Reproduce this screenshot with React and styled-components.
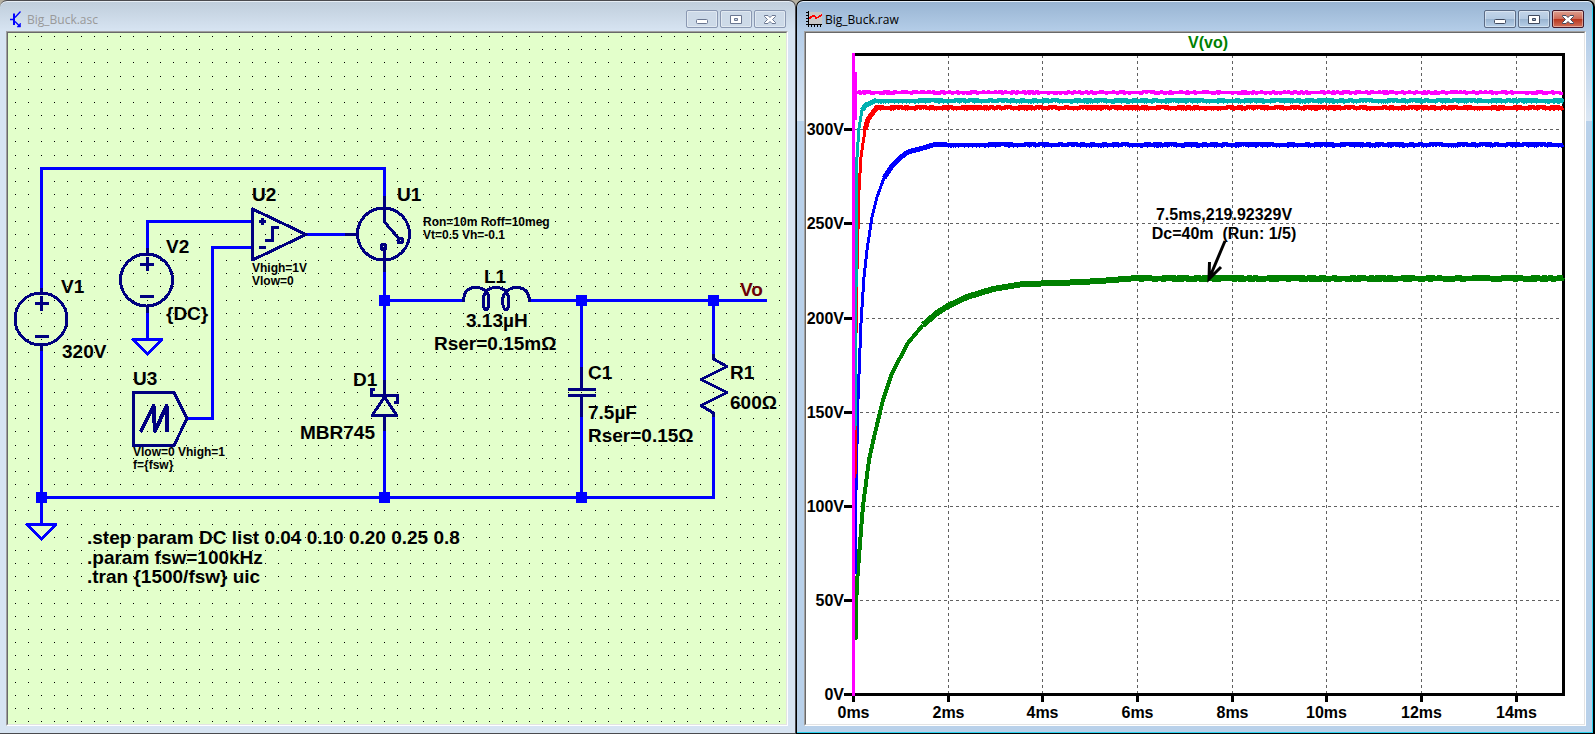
import styled, { createGlobalStyle } from "styled-components";

const WIRE = "#0000ff";
const SYMBOL = "#000080";

const DOT_STEP = 13.18;

function dotGridPath() {
  let d = "";
  for (let row = 0; row < 53; row++) {
    const y = Math.floor(36.5 + row * DOT_STEP);
    for (let col = 0; col < 59; col++) {
      const x = Math.floor(15.2 + col * DOT_STEP);
      d += `M${x} ${y}h1v1h-1z`;
    }
  }
  return d;
}

const WIRES = [
  "M41.5 288V168.5H384.5V196",
  "M41.5 351V524",
  "M40 497.5H713.5V417",
  "M147.5 248V221.5H252",
  "M147.5 313V339",
  "M252 247.5H212.5V418.5H187",
  "M306 234.5H345",
  "M384.5 272V380",
  "M384.5 431V497",
  "M384 300.5H463",
  "M530 300.5H767",
  "M581.5 300V367",
  "M581.5 417V497",
  "M713.5 300V354",
];

const GROUNDS = ["M27 524.5H56L41.5 539Z", "M133 339.5H162L147.5 354Z"];

const NODES = [
  [41.5, 497.5],
  [384.5, 497.5],
  [581.5, 497.5],
  [384.5, 300.5],
  [581.5, 300.5],
  [713.5, 300.5],
];

const SYMBOLS = [
  // V1
  "M41.5 288V294M41.5 345V351M35 303.5H49M41.5 296V311M35 336.5H49",
  // V2
  "M147.5 248V255M147.5 305V313M140 264.5H154M147.5 257V271M140 296.5H154",
  // U1
  "M384.5 196V222L400 240M384.5 247V272M345 234.5H358",
  // U2
  "M252.5 209V260L306 234.5ZM259 221.5H266M262.5 218V225M259 247.5H266",
  "M265 240.5H272.5V227.5H279",
  // U3
  "M133.5 392.5H174L187 418.5L174 445.5H133.5Z",
  // D1
  "M384.5 380V395M384.5 415V431M375 389.5H371.5V395.5H397.5V402.5H394",
  "M384.5 397L397 415.5H372Z",
  // L1
  "M463.5 302C463.5 291 469 287.5 475.5 287.5C486 287.5 489 294 489 301C489 306 487.5 310 486 310C484.5 310 483 306 483 301C483 294 487 287.5 496 287.5C505 287.5 509 294 509 301C509 306 507.5 310 506 310C504.5 310 502.5 306 502.5 301C502.5 294 508 287.5 516 287.5C524 287.5 529.5 291 529.5 302",
  // C1
  "M581.5 367V389M568 389.5H596M568 395.5H596M581.5 396V417",
  // R1
  "M713.5 354V359L727 366.5L701 379.5L727 392.5L701 405.5L713.5 413V417",
];

const SAWTOOTH = "M140.5 432L153.5 406L155 431L166.5 406L167.5 432";

const CIRCLES = [
  [41, 319, 26],
  [146.5, 280, 26],
  [383.5, 234, 26],
];

const CONTACTS = [
  [400.5, 240.5],
  [383.5, 247],
];

const LABELS = [
  [61, 293, "V1"],
  [62, 358, "320V"],
  [166, 253, "V2"],
  [166, 320, "{DC}"],
  [133, 385, "U3"],
  [252, 201, "U2"],
  [397, 201, "U1"],
  [484, 283, "L1"],
  [466, 327, "3.13µH"],
  [434, 350, "Rser=0.15mΩ"],
  [353, 386, "D1"],
  [300, 439, "MBR745"],
  [588, 379, "C1"],
  [588, 419, "7.5µF"],
  [588, 442, "Rser=0.15Ω"],
  [730, 379, "R1"],
  [730, 409, "600Ω"],
  [87, 544, ".step param DC list 0.04 0.10 0.20 0.25 0.8"],
  [87, 564, ".param fsw=100kHz"],
  [87, 583, ".tran {1500/fsw} uic"],
];

const NOTES = [
  [423, 226, "Ron=10m Roff=10meg"],
  [423, 239, "Vt=0.5 Vh=-0.1"],
  [252, 272, "Vhigh=1V"],
  [252, 285, "Vlow=0"],
  [133, 456, "Vlow=0 Vhigh=1"],
  [133, 469, "f={fsw}"],
];

function Schematic() {
  return (
    <Drawing viewBox="8 33 778 691" preserveAspectRatio="xMinYMin meet" role="img" aria-label="Buck converter schematic">
      <path d={dotGridPath()} fill="#000" shapeRendering="crispEdges" />
      <g fill="none" stroke={WIRE} strokeWidth="3" strokeLinejoin="round" shapeRendering="crispEdges">
        {WIRES.map((d) => <path key={d} d={d} />)}
        {GROUNDS.map((d) => <path key={d} d={d} />)}
      </g>
      <g fill="none" stroke={SYMBOL} strokeWidth="3" strokeLinejoin="round" shapeRendering="crispEdges">
        {SYMBOLS.map((d) => <path key={d} d={d} />)}
        <path d={SAWTOOTH} strokeWidth="4" />
        {CIRCLES.map(([cx, cy, r]) => <circle key={`${cx}-${cy}`} cx={cx} cy={cy} r={r} />)}
        {CONTACTS.map(([cx, cy]) => <circle key={`${cx}-${cy}`} cx={cx} cy={cy} r="2.5" />)}
      </g>
      {NODES.map(([x, y]) => (
        <rect key={`${x}-${y}`} x={x - 5.5} y={y - 5.5} width="11" height="11" fill={WIRE} />
      ))}
      {LABELS.map(([x, y, text]) => <Label key={text} x={x} y={y}>{text}</Label>)}
      <Label x="740" y="296" $color="#6b0008">Vo</Label>
      {NOTES.map(([x, y, text]) => <Label key={text} x={x} y={y} $size={12}>{text}</Label>)}
    </Drawing>
  );
}

const PLOT = { left: 853.5, right: 1563.5, top: 54.5, bottom: 694.5 };
const MS = (PLOT.right - PLOT.left) / 15;
const VOLT = (PLOT.bottom - PLOT.top) / 340;

const TIMES = [0, 2, 4, 6, 8, 10, 12, 14];
const VOLTS = [0, 50, 100, 150, 200, 250, 300];

const timeX = (t) => Math.floor(PLOT.left + t * MS) + 0.5;
const voltY = (v) => Math.floor(PLOT.bottom - v * VOLT) + 0.5;

// rise: the start-up curve; settle: the slower part of it, where the ripple thickens the line
const TRACES = [
  {
    name: "green",
    color: "#008000",
    width: 5,
    rise: [[855.5, 640], [856, 608], [857, 583], [860, 543], [863, 506], [869, 460], [875, 433], [883, 400], [892, 373], [908, 343], [923, 325]],
    settle: [[923, 325], [937, 313], [948, 306], [967, 297], [993, 289], [1023, 284], [1060, 283], [1100, 281], [1137, 278]],
  },
  {
    name: "blue",
    color: "#0000ff",
    width: 4,
    rise: [[855.5, 574], [856, 490], [858, 400], [861, 323], [864, 277], [867, 250], [872, 217], [877, 197], [884, 178]],
    settle: [[884, 178], [892, 166], [900, 158], [908, 152], [923, 148], [933, 145], [947, 144]],
  },
  {
    name: "red",
    color: "#ff0000",
    width: 4,
    rise: [[855, 478], [856, 335], [857, 270], [858, 230], [859, 190], [861, 157], [865, 130]],
    settle: [[865, 130], [868, 119], [877, 107]],
  },
  {
    name: "teal",
    color: "#00b0b0",
    width: 4,
    rise: [[855, 430], [856, 290], [857, 157], [859, 128], [862, 110]],
    settle: [[862, 110], [866, 105], [877, 100]],
  },
  {
    name: "magenta",
    color: "#ff00ff",
    width: 3,
    rise: [],
    settle: [[856, 92]],
  },
];

// small repeatable generator, so the ripple is the same on every render
function rippleSource(seed) {
  let state = seed;
  return () => {
    state = (state * 16807) % 2147483647;
    return state / 2147483647;
  };
}

function polyline(points) {
  return points.length ? "M" + points.map(([x, y]) => `${x} ${y}`).join("L") : "";
}

function ripplePath({ settle, name }) {
  const next = rippleSource(name.length * 7919 + 17);
  const [start, level] = settle[settle.length - 1];
  const y = level + 0.5;
  let d = `M${start} ${y}`;
  for (let x = start + 1; x <= PLOT.right; x++) {
    const r = next();
    const offset = r < 0.2 ? -1 : r > 0.8 ? 1 : 0;
    d += `V${y + offset}H${x}`;
  }
  return d;
}

function Waveform() {
  return (
    <Drawing viewBox="806 33 778 691" preserveAspectRatio="xMinYMin meet" role="img" aria-label="V(vo) against time">
      <g stroke="#606060" strokeWidth="1" strokeDasharray="3 3" shapeRendering="crispEdges">
        {VOLTS.slice(1).map((v) => (
          <line key={v} x1={PLOT.left} x2={PLOT.right} y1={voltY(v)} y2={voltY(v)} />
        ))}
        {TIMES.slice(1).map((t) => (
          <line key={t} x1={timeX(t)} x2={timeX(t)} y1={PLOT.top} y2={PLOT.bottom} />
        ))}
      </g>
      <g fill="none" stroke="#000" strokeWidth="3" shapeRendering="crispEdges">
        <rect x={PLOT.left} y={PLOT.top} width={PLOT.right - PLOT.left} height={PLOT.bottom - PLOT.top} />
        {VOLTS.map((v) => <line key={v} x1="844" x2="853" y1={voltY(v)} y2={voltY(v)} />)}
        {TIMES.map((t) => <line key={t} x1={timeX(t)} x2={timeX(t)} y1="694" y2="702" />)}
      </g>
      {TRACES.map((trace) => (
        <g key={trace.name} fill="none" stroke={trace.color} strokeLinejoin="round" shapeRendering="crispEdges">
          <path d={polyline(trace.rise)} strokeWidth={trace.width > 4 ? 4 : 3} />
          <path d={polyline(trace.settle)} strokeWidth={trace.width + 1} />
          <path d={ripplePath(trace)} strokeWidth={trace.width} />
        </g>
      ))}
      <path d="M853.5 53V696M855.5 72V120" stroke="#ff00ff" strokeWidth="3" shapeRendering="crispEdges" />
      <Label x="1208" y="48" $size={16} $anchor="middle" $color="#008000">V(vo)</Label>
      {VOLTS.map((v) => (
        <Label key={v} x="844" y={voltY(v) + 5.5} $size={16} $anchor="end">{`${v}V`}</Label>
      ))}
      {TIMES.map((t) => (
        <Label key={t} x={timeX(t)} y="718" $size={16} $anchor="middle">{`${t}ms`}</Label>
      ))}
      <Label x="1224" y="220" $size={16} $anchor="middle">7.5ms,219.92329V</Label>
      <Label x="1224" y="239" $size={16} $anchor="middle">Dc=40m  (Run: 1/5)</Label>
      <path d="M1225 241L1209 279M1209.5 262L1209 279L1221 267" fill="none" stroke="#000" strokeWidth="3" />
    </Drawing>
  );
}

function TransistorIcon() {
  return (
    <svg width="16" height="17" viewBox="0 0 16 17" fill="none" stroke={WIRE} aria-hidden="true">
      <path d="M6 2.5V14" strokeWidth="2" />
      <path d="M2 8.5H6M7 6.5L12.5 0.5M7 10.5L12 15.5" strokeWidth="1.3" />
      <path d="M12.5 12V16H9L12.5 12Z" fill={WIRE} strokeWidth="0.5" />
    </svg>
  );
}

function PlotIcon() {
  return (
    <svg width="16" height="17" viewBox="0 0 16 17" fill="none" shapeRendering="crispEdges" aria-hidden="true">
      <rect x="3" y="1" width="13" height="12" fill="#c8c8c8" />
      <path d="M2.5 0V14M2 13.5H16" stroke="#000" />
      <path d="M0 1.5H2M0 4.5H2M0 7.5H2M0 10.5H2M0 13.5H2M2.5 14V16M5.5 14V16M8.5 14V16M11.5 14V16M14.5 14V16" stroke="#000" />
      <path d="M3 8L5 6L8 4.5L10 7L12 6.5L16 3.5" stroke="#ff0000" strokeWidth="1.5" />
    </svg>
  );
}

function CaptionButtons({ active }) {
  const line = active ? "#404a5e" : "#6a7690";
  return (
    <Buttons>
      <CaptionButton aria-label="Minimize" $active={active}>
        <svg width="12" height="9" fill="#fff" stroke={line}>
          <rect x="0.5" y="4.5" width="11" height="4" rx="1" />
        </svg>
      </CaptionButton>
      <CaptionButton aria-label="Maximize" $active={active}>
        <svg width="12" height="9" fill="#fff" stroke={line}>
          <path fillRule="evenodd" d="M0.5 0.5H11.5V8.5H0.5ZM4.5 3.5V5.5H7.5V3.5Z" />
        </svg>
      </CaptionButton>
      <CaptionButton aria-label="Close" $active={active} $close>
        <svg width="12" height="9" fill="#fff" stroke={line}>
          <path d="M0.5 0.5H4L6 2.5L8 0.5H11.5V1.5L8.5 4.5L11.5 7.5V8.5H8L6 6.5L4 8.5H0.5V7.5L3.5 4.5L0.5 1.5Z" />
        </svg>
      </CaptionButton>
    </Buttons>
  );
}

function Window({ title, icon, active, paper, children }) {
  return (
    <Frame $active={active}>
      <TitleBar>
        {icon}
        <Title $active={active}>{title}</Title>
        <CaptionButtons active={active} />
      </TitleBar>
      <Bevel>
        <Canvas $paper={paper}>{children}</Canvas>
      </Bevel>
    </Frame>
  );
}

export default function App() {
  return (
    <>
      <GlobalStyle />
      <Workspace>
        <Window title="Big_Buck.asc" icon={<TransistorIcon />} paper="#e3ffcb">
          <Schematic />
        </Window>
        <Window title="Big_Buck.raw" icon={<PlotIcon />} paper="#ffffff" active>
          <Waveform />
        </Window>
      </Workspace>
    </>
  );
}

const GlobalStyle = createGlobalStyle`
  * {
    box-sizing: border-box;
  }

  body {
    margin: 0;
    background: #b5b0a2;
    font-family: "Liberation Sans", Arial, sans-serif;
  }
`;

const Workspace = styled.main`
  display: grid;
  grid-template-columns: 796fr 799fr;
  min-height: 100vh;
`;

const Frame = styled.section`
  display: flex;
  flex-direction: column;
  min-width: 0;
  border: 1px solid ${(p) => (p.$active ? "#000" : "#4a4a4e")};
  border-width: ${(p) => (p.$active ? "1px 2px 1px 1px" : "1px 1px 1px 0")};
  border-radius: 7px 7px 0 0;
  padding: ${(p) => (p.$active ? "0 7px 7px" : "0 7px 7px 6px")};
  background: ${(p) =>
    p.$active
      ? "linear-gradient(#98b4d2, #b4cde8 30px, #dbe7f4 120px, #b9d1ea 120px)"
      : "linear-gradient(#bfcddb, #d7e4f2 30px)"};
  box-shadow: ${(p) =>
    p.$active
      ? "inset 0 1px #e4eef8, inset -1px -1px #2cd0ee"
      : "inset 0 1px #e6edf4"};
`;

const TitleBar = styled.header`
  display: flex;
  align-items: flex-end;
  gap: 3px;
  height: 30px;
  padding: 0 2px 3px;
`;

const Title = styled.h1`
  flex: 1;
  margin: 0;
  font-family: "Open Sans", "Noto Sans", sans-serif;
  font-size: 12px;
  font-weight: 400;
  line-height: 17px;
  color: ${(p) => (p.$active ? "#000" : "#999")};
`;

const Buttons = styled.div`
  display: flex;
  gap: 2px;
`;

const closeFill = "linear-gradient(#dda090, #cf6c58 48%, #b8341c 50%, #d0705a)";
const activeFill = "linear-gradient(#c3d5e9, #b4cae2 48%, #98b3d0 50%, #b8d0e8)";

const CaptionButton = styled.button`
  display: flex;
  align-items: center;
  justify-content: center;
  width: 32px;
  height: 18px;
  padding: 0;
  border: 1px solid ${(p) => (p.$active ? (p.$close ? "#43182a" : "#5b6b85") : "#8a98b2")};
  border-radius: 2px;
  background: ${(p) => (p.$active ? (p.$close ? closeFill : activeFill) : "#cddae8")};
  box-shadow: inset 0 0 0 1px rgba(255, 255, 255, 0.4);
`;

const Bevel = styled.div`
  display: flex;
  flex: 1;
  border: 1px solid;
  border-color: #a0a0a0 #fff #fff #a0a0a0;
`;

const Canvas = styled.div`
  flex: 1;
  min-width: 0;
  border: 1px solid;
  border-color: #696969 #e3e3e3 #e3e3e3 #696969;
  background: ${(p) => p.$paper};
`;

const Drawing = styled.svg`
  display: block;
  width: 100%;
  height: auto;
`;

const Label = styled.text`
  font-size: ${(p) => p.$size || 19}px;
  font-weight: 700;
  fill: ${(p) => p.$color || "#000"};
  text-anchor: ${(p) => p.$anchor || "start"};
  white-space: pre;
`;
